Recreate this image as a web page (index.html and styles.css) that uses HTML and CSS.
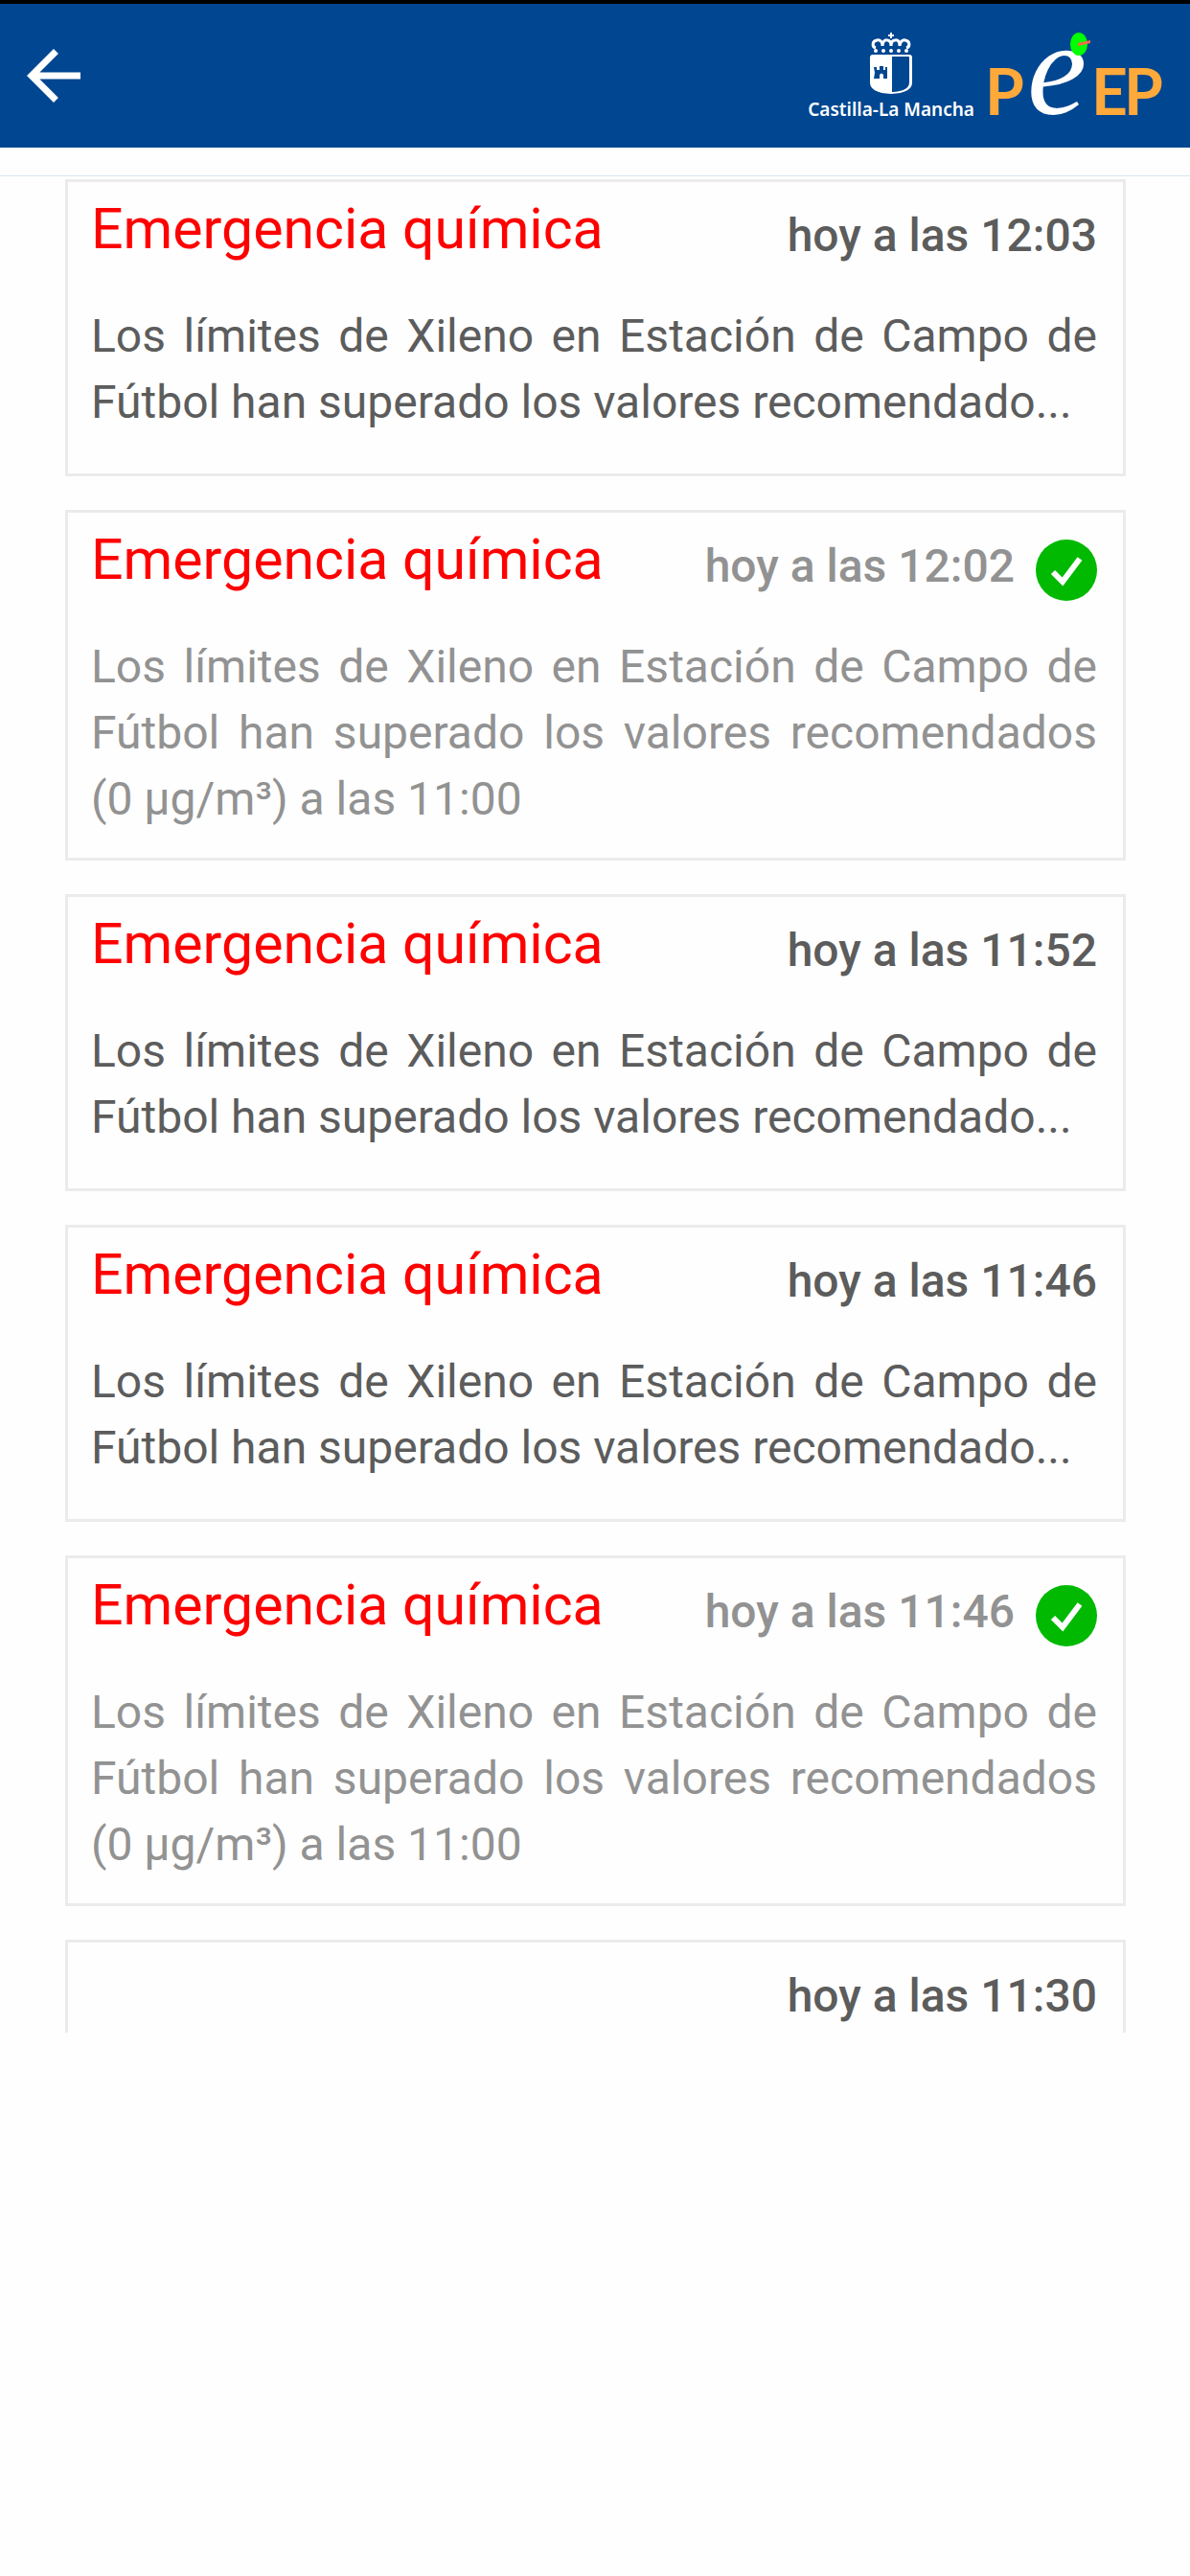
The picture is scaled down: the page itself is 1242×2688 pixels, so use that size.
FILE: index.html
```html
<!DOCTYPE html>
<html lang="es">
<head>
    <meta charset="UTF-8">
    <meta name="viewport" content="width=device-width, initial-scale=1.0">
    <title>PEEP - Avisos</title>
    <link rel="stylesheet" href="styles.css">
</head>
<body>
    <header class="toolbar">
        <button class="back" type="button" aria-label="Volver">
            <svg viewBox="4 4 16 16" width="56" height="56"><path fill="#fff" d="M20 11H7.83l5.59-5.59L12 4l-8 8 8 8 1.41-1.41L7.83 13H20v-2z"/></svg>
        </button>
        <div class="logos">
            <div class="region">
                <svg class="shield" viewBox="0 0 46 64" width="46" height="64">
                    <path d="M23 0v6M20 3h6" stroke="#fff" stroke-width="2"/>
                    <path d="M7 16c-4-1-4-7 1-8 4-1 6 2 6 6 0-5 3-7 5-6 3 0 4 2 4 6 0-4 1-6 4-6 3-1 5 1 5 6 0-4 3-7 6-6 5 1 5 7 1 8" fill="none" stroke="#fff" stroke-width="3"/>
                    <g fill="#fff"><circle cx="7" cy="19" r="2"/><circle cx="15" cy="19" r="2"/><circle cx="23" cy="19" r="2"/><circle cx="31" cy="19" r="2"/><circle cx="39" cy="19" r="2"/></g>
                    <path d="M4 23h38q3 0 3 3v26q0 11-22 12Q1 63 1 52V26q0-3 3-3z" fill="#fff"/>
                    <path d="M24 25h17q1 0 1 1v26q0 9-18 10z" fill="#004690"/>
                    <path d="M5 36h3v3h3v-4h4v4h2v-3h2v12h-4v-4q-2-3-4 0v4H5l1-6z" fill="#004690"/>
                </svg>
                <span class="region-name">Castilla-La Mancha</span>
            </div>
            <svg class="peep" viewBox="0 0 176 92" width="176" height="92">
                <text class="peep-letter" x="-5" y="87">P</text>
                <text class="peep-e" x="39" y="86">e</text>
                <text class="peep-letter" x="106" y="87">E</text>
                <text class="peep-letter" x="140" y="87">P</text>
                <ellipse cx="93" cy="13" rx="9" ry="12" fill="#0f0"/>
                <path d="M92 12l13-3v3l-13 3z" fill="#f06a4a"/>
            </svg>
        </div>
    </header>

    <main class="alerts">
        <article class="alert">
            <div class="alert-head">
                <h2>Emergencia química</h2>
                <time>hoy a las 12:03</time>
            </div>
            <p class="short">Los límites de Xileno en Estación de Campo de Fútbol han superado los valores recomendado...</p>
        </article>
        <article class="alert read">
            <div class="alert-head">
                <h2>Emergencia química</h2>
                <time>hoy a las 12:02</time>
                <svg class="check" viewBox="0 0 64 64" width="64" height="64"><circle cx="32" cy="32" r="32" fill="#00b900"/><path d="M18 34l10 10 18-24" fill="none" stroke="#fff" stroke-width="6"/></svg>
            </div>
            <p>Los límites de Xileno en Estación de Campo de Fútbol han superado los valores recomendados (0 µg/m³) a las 11:00</p>
        </article>
        <article class="alert">
            <div class="alert-head">
                <h2>Emergencia química</h2>
                <time>hoy a las 11:52</time>
            </div>
            <p class="short">Los límites de Xileno en Estación de Campo de Fútbol han superado los valores recomendado...</p>
        </article>
        <article class="alert">
            <div class="alert-head">
                <h2>Emergencia química</h2>
                <time>hoy a las 11:46</time>
            </div>
            <p class="short">Los límites de Xileno en Estación de Campo de Fútbol han superado los valores recomendado...</p>
        </article>
        <article class="alert read">
            <div class="alert-head">
                <h2>Emergencia química</h2>
                <time>hoy a las 11:46</time>
                <svg class="check" viewBox="0 0 64 64" width="64" height="64"><circle cx="32" cy="32" r="32" fill="#00b900"/><path d="M18 34l10 10 18-24" fill="none" stroke="#fff" stroke-width="6"/></svg>
            </div>
            <p>Los límites de Xileno en Estación de Campo de Fútbol han superado los valores recomendados (0 µg/m³) a las 11:00</p>
        </article>
        <article class="alert cut">
            <div class="alert-head">
                <time>hoy a las 11:30</time>
            </div>
        </article>
    </main>
</body>
</html>
```

FILE: styles.css
```css
* {
    box-sizing: border-box;
}
body {
    margin: 0;
    background-color: #fefefe;
    color: #5c5c5c;
    font-family: Roboto, "Liberation Sans", sans-serif;
    font-size: 48px;
    line-height: 69px;
}
.toolbar {
    display: flex;
    justify-content: space-between;
    height: 154px;
    padding: 29px 33px 0 28px;
    border-top: 4px solid #000;
    background-color: #004690;
}
.back {
    align-self: flex-start;
    display: flex;
    margin-top: 18px;
    padding: 0;
    border: none;
    background: none;
    cursor: pointer;
}
.logos {
    display: flex;
    gap: 16px;
}
.region {
    display: flex;
    flex-direction: column;
    align-items: center;
}
.shield {
    margin-top: 1px;
}
.region-name {
    margin-top: 5px;
    color: #fff;
    font-family: "Noto Sans", "DejaVu Sans", sans-serif;
    font-size: 19px;
    font-weight: 600;
    line-height: 22px;
}
.peep {
    overflow: visible;
}
.peep-letter {
    fill: #ffa93a;
    font-family: Lato, sans-serif;
    font-size: 66px;
    font-weight: 700;
}
.peep-e {
    fill: #fff;
    font-family: "Liberation Serif", serif;
    font-size: 140px;
    font-style: italic;
}
.alerts {
    display: flex;
    flex-direction: column;
    gap: 35px;
    margin-top: 29px;
    padding: 3px 67px 0 68px;
    border-top: 1px solid #d5e8f3;
}
.alert {
    padding: 14px 27px 27px 24px;
    border: 3px solid #ebebeb;
}
.alert-head {
    display: flex;
    height: 70px;
    margin-bottom: 42px;
}
.alert h2 {
    margin: 0;
    color: #f00;
    font-size: 59px;
    font-weight: 400;
    line-height: 70px;
}
.alert time {
    margin-top: 7px;
    margin-left: auto;
    font-weight: 500;
    line-height: 70px;
}
.alert p {
    margin: 0;
    text-align: justify;
}
.alert .short {
    margin-bottom: 13px;
}
.read {
    color: #929292;
}
.check {
    margin-top: 14px;
    margin-left: 22px;
}
.cut {
    padding-bottom: 10px;
    border-bottom: none;
}
.cut .alert-head {
    margin-bottom: 0;
}
```
